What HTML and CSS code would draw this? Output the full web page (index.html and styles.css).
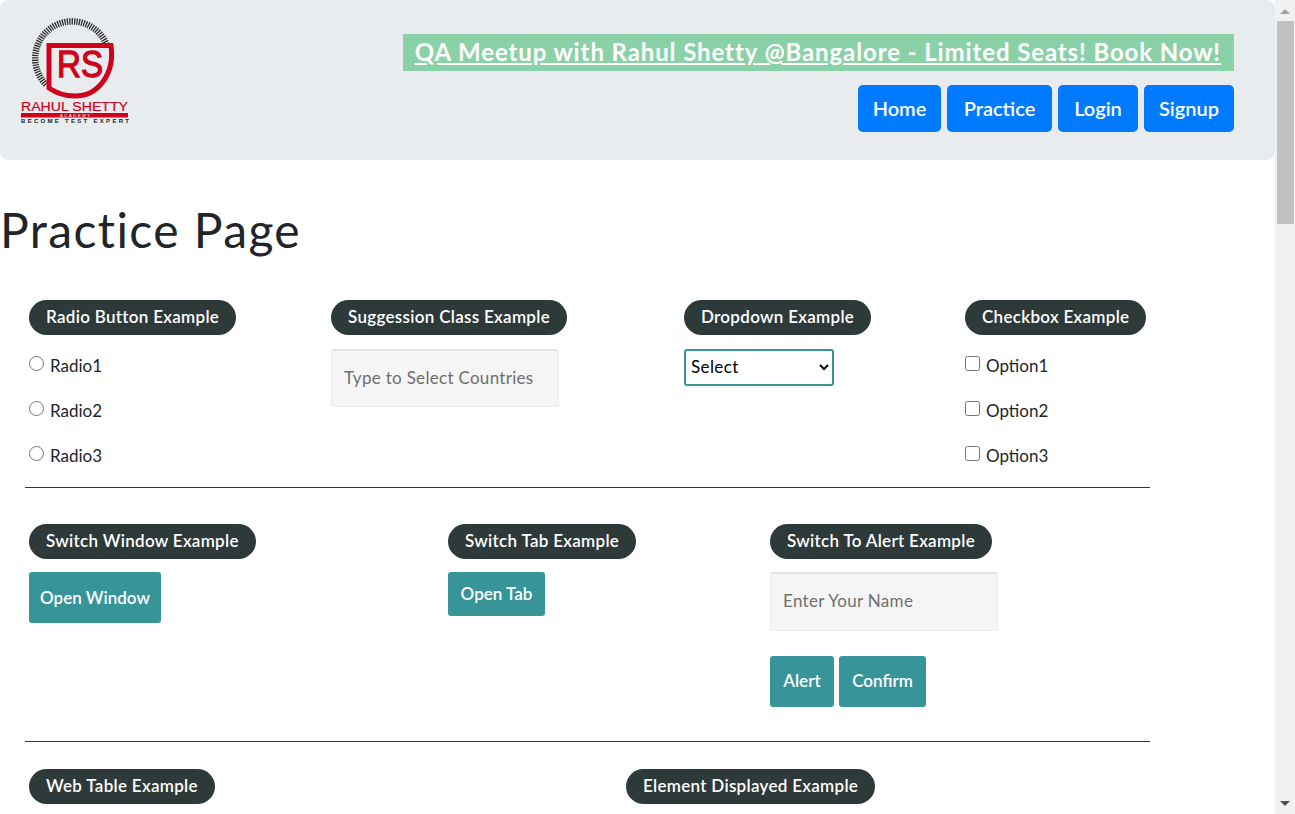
FILE: index.html
```html
<!DOCTYPE html>
<html lang="en">
<head>
    <meta charset="UTF-8">
    <title>Practice Page</title>
    <link rel="stylesheet" href="styles.css">
</head>
<body>
    <div class="window">
        <div class="page">
            <header class="top">
                <svg class="logo" width="130" height="130" viewBox="0 0 130 130">
                    <path d="M46 84.5 A37 37 0 1 1 106.5 44.5" fill="none" stroke="#2b2b2b" stroke-width="6.5" stroke-dasharray="1.3 1.1"/>
                    <path d="M49 45.5 H111 C115 74 98 96 75 96 C65 96 56 93 49 88 Z" fill="#e9ecef" stroke="#d0021b" stroke-width="5"/>
                    <text x="57" y="77" class="logo-rs" textLength="46" lengthAdjust="spacingAndGlyphs">RS</text>
                    <text x="21" y="111" class="logo-name" textLength="107" lengthAdjust="spacingAndGlyphs">RAHUL SHETTY</text>
                    <rect x="21" y="113" width="107" height="4.5" fill="#d0021b"/>
                    <text x="60" y="117" class="logo-academy" textLength="30">ACADEMY</text>
                    <text x="21" y="123" class="logo-tag" textLength="108">BECOME TEST EXPERT</text>
                </svg>
                <div class="top-right">
                    <a class="banner" href="#">QA Meetup with Rahul Shetty @Bangalore - Limited Seats! Book Now!</a>
                    <nav class="nav">
                        <button class="nav-btn">Home</button>
                        <button class="nav-btn">Practice</button>
                        <button class="nav-btn">Login</button>
                        <button class="nav-btn">Signup</button>
                    </nav>
                </div>
            </header>

            <h1 class="title">Practice Page</h1>

            <section class="row row-one">
                <div class="box">
                    <span class="legend">Radio Button Example</span>
                    <label class="opt"><input type="radio" name="radio">Radio1</label>
                    <label class="opt"><input type="radio" name="radio">Radio2</label>
                    <label class="opt"><input type="radio" name="radio">Radio3</label>
                </div>
                <div class="box">
                    <span class="legend">Suggession Class Example</span>
                    <input class="field" type="text" placeholder="Type to Select Countries">
                </div>
                <div class="box">
                    <span class="legend">Dropdown Example</span>
                    <select class="drop"><option>Select</option></select>
                </div>
                <div class="box">
                    <span class="legend">Checkbox Example</span>
                    <label class="opt"><input type="checkbox">Option1</label>
                    <label class="opt"><input type="checkbox">Option2</label>
                    <label class="opt"><input type="checkbox">Option3</label>
                </div>
            </section>
            <hr class="line">

            <section class="row row-two">
                <div class="box">
                    <span class="legend">Switch Window Example</span>
                    <button class="btn btn-tall btn-window">Open Window</button>
                </div>
                <div class="box">
                    <span class="legend">Switch Tab Example</span>
                    <button class="btn btn-tab">Open Tab</button>
                </div>
                <div class="box">
                    <span class="legend">Switch To Alert Example</span>
                    <input class="field field-name" type="text" placeholder="Enter Your Name">
                    <div class="btn-pair">
                        <button class="btn btn-tall">Alert</button>
                        <button class="btn btn-tall">Confirm</button>
                    </div>
                </div>
            </section>
            <hr class="line">

            <section class="row row-three">
                <div class="box"><span class="legend">Web Table Example</span></div>
                <div class="box"><span class="legend">Element Displayed Example</span></div>
            </section>
        </div>

        <div class="scrollbar">
            <span class="arrow arrow-up"></span>
            <span class="thumb"></span>
            <span class="arrow arrow-down"></span>
        </div>
    </div>
</body>
</html>
```

FILE: styles.css
```css
html, body { margin: 0; height: 814px; overflow: hidden; background: #fff; }
body { font-family: Lato, "Open Sans", sans-serif; color: #212529; }
.window { display: flex; height: 814px; }
.page { width: 1275px; height: 814px; overflow: hidden; flex: none; }

.top { display: flex; justify-content: space-between; height: 160px; background: #e9ecef; border-radius: 8px; padding-right: 41px; box-sizing: border-box; }
.logo { flex: none; }
.logo-rs { font-family: "Liberation Sans", sans-serif; font-size: 37px; fill: #d0021b; stroke: #d0021b; stroke-width: 1.3; }
.logo-name { font-family: "Liberation Sans", sans-serif; font-size: 12px; fill: #d0021b; stroke: #d0021b; stroke-width: 0.2; }
.logo-academy { font-family: "Liberation Sans", sans-serif; font-size: 4px; fill: #fff; }
.logo-tag { font-family: "Liberation Sans", sans-serif; font-weight: 700; font-size: 6px; fill: #222; }
.top-right { display: flex; flex-direction: column; align-items: flex-end; padding-top: 34px; }
.banner { display: block; height: 37px; line-height: 35px; padding: 0 13px 0 12px; background: #8bd1a7; color: #fff; font-size: 24px; font-weight: 700; letter-spacing: 0.89px; white-space: nowrap; }
.nav { display: grid; grid-template-columns: 83px 105px 80px 90px; gap: 6px; margin-top: 14px; }
.nav-btn { height: 47px; padding: 0 0 2px; background: #007bff; color: #fff; border: 0; border-radius: 5px; font: 600 20px Lato, sans-serif; }

.title { margin: 0; padding-top: 42px; font-size: 48px; font-weight: 400; line-height: 56px; height: 56px; letter-spacing: 1.4px; }

.row { display: grid; margin-left: 25px; width: 1125px; box-sizing: border-box; padding-left: 4px; }
.row-one { grid-template-columns: 302px 353px 281px 1fr; height: 187px; margin-top: 42px; }
.row-two { grid-template-columns: 419px 322px 1fr; height: 217px; margin-top: 36px; }
.row-three { grid-template-columns: 597px 1fr; margin-top: 27px; }
.box { display: flex; flex-direction: column; align-items: flex-start; }
.legend { height: 35px; line-height: 34px; padding: 0 17px; background: #2e3a3a; color: #fff; border-radius: 18px; font-size: 17px; font-weight: 600; letter-spacing: 0.3px; white-space: nowrap; }

.opt { display: flex; align-items: flex-start; height: 45px; font-size: 17px; line-height: 20px; }
.opt input { width: 15px; height: 15px; margin: 0 6px 0 0; }
.legend + .opt { margin-top: 21px; }

.field { width: 228px; height: 58px; margin-top: 14px; padding: 0 12px 3px; box-sizing: border-box; background: #f5f5f5; border: 1px solid #ebebeb; border-top: 2px solid #e4e4e4; border-radius: 3px; font: 17px Lato, sans-serif; letter-spacing: 0.3px; }
.field::placeholder { color: #6f6f6f; }
.field-name { margin-top: 13px; height: 59px; }
.drop { width: 150px; height: 37px; margin-top: 14px; padding: 0 0 2px 1px; background: #fff; color: #000; border: 2px solid #37959a; border-radius: 3px; font: 17px Lato, sans-serif; letter-spacing: 0.4px; }

.btn { height: 44px; margin-top: 13px; padding: 0 0 2px; background: #37959a; color: #fff; border: 0; border-radius: 3px; font: 600 17px Lato, sans-serif; }
.btn-tall { height: 51px; }
.btn-window { width: 132px; padding-bottom: 0; }
.btn-tab { width: 97px; }
.btn-pair { display: grid; grid-template-columns: 64px 87px; gap: 5px; margin-top: 12px; }
.btn-pair .btn { margin-top: 13px; }

.line { margin: 0 0 0 25px; width: 1125px; height: 1px; border: 0; background: #2e3a3a; }

.scrollbar { width: 20px; height: 814px; flex: none; background: #f1f1f1; display: flex; flex-direction: column; align-items: center; }
.thumb { display: block; width: 17px; height: 203px; background: #c1c1c1; margin-top: 7px; }
.arrow { display: block; width: 0; height: 0; border-left: 5px solid transparent; border-right: 5px solid transparent; }
.arrow-up { border-bottom: 5px solid #a3a3a3; margin-top: 9px; }
.arrow-down { border-top: 5px solid #505050; margin-top: auto; margin-bottom: 8px; }
```
